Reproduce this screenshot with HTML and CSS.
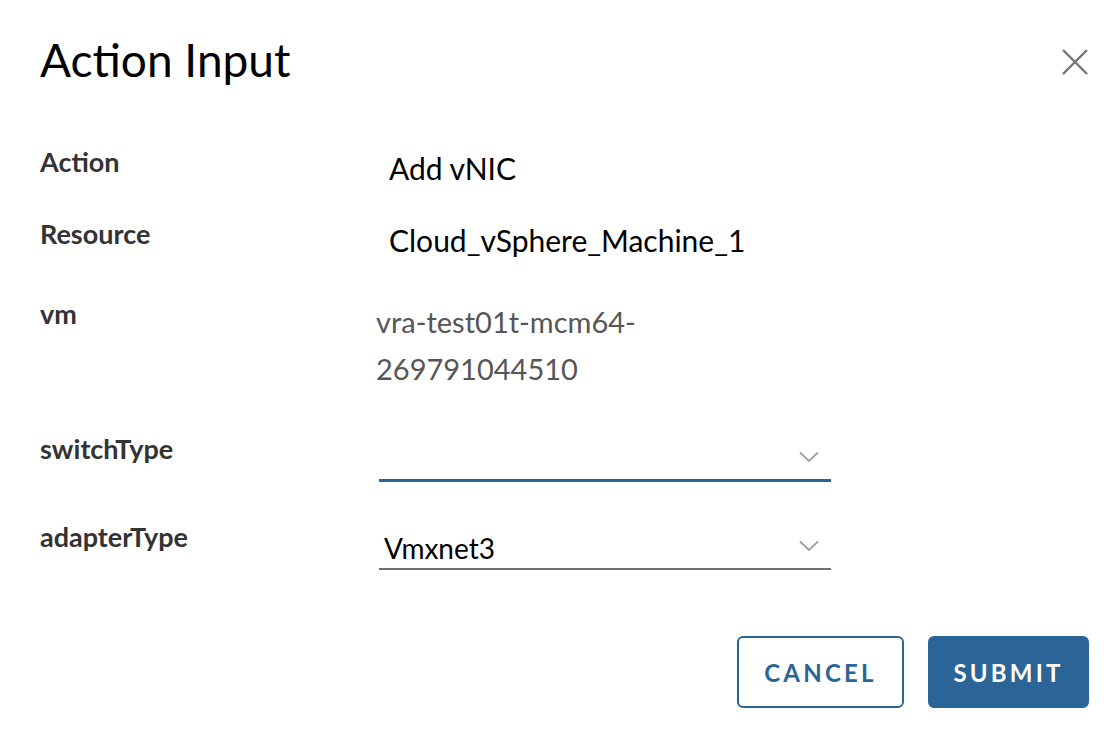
FILE: index.html
```html
<!DOCTYPE html>
<html>
<head>
<meta charset="utf-8">
<link rel="stylesheet" href="styles.css">
</head>
<body>
<div class="modal">
  <div class="header">
    <h1 class="title">Action Input</h1>
    <button class="close" aria-label="Close">
      <svg width="28" height="28" viewBox="0 0 28 28"><path d="M2 2 L26 26 M26 2 L2 26" stroke="#747474" stroke-width="2.4" fill="none"/></svg>
    </button>
  </div>
  <div class="form">
    <div class="row r1">
      <div class="label">Action</div>
      <div class="value ro">Add vNIC</div>
    </div>
    <div class="row r2">
      <div class="label">Resource</div>
      <div class="value ro">Cloud_vSphere_Machine_1</div>
    </div>
    <div class="row r3">
      <div class="label">vm</div>
      <div class="value muted">vra-test01t-mcm64-<br>269791044510</div>
    </div>
    <div class="row r4">
      <div class="label">switchType</div>
      <div class="select focused">
        <span class="sel-text"></span>
        <svg class="chev" width="20" height="12" viewBox="0 0 20 12"><path d="M1 1.5 L10 10 L19 1.5" stroke="#a0a0a0" stroke-width="1.8" fill="none"/></svg>
      </div>
    </div>
    <div class="row r5">
      <div class="label">adapterType</div>
      <div class="select">
        <span class="sel-text">Vmxnet3</span>
        <svg class="chev" width="20" height="12" viewBox="0 0 20 12"><path d="M1 1.5 L10 10 L19 1.5" stroke="#a0a0a0" stroke-width="1.8" fill="none"/></svg>
      </div>
    </div>
  </div>
  <div class="footer">
    <button class="btn btn-outline">CANCEL</button>
    <button class="btn btn-primary">SUBMIT</button>
  </div>
</div>
</body>
</html>
```
FILE: styles.css
```css
* { box-sizing: border-box; }
html, body { margin: 0; padding: 0; background: #ffffff; }
body { font-family: Lato, "Noto Sans", sans-serif; color: #000; }

.modal {
  width: 1120px;
  height: 740px;
  padding: 0 31px 0 40px;
}

.header {
  display: flex;
  justify-content: space-between;
  align-items: flex-start;
  padding-top: 32px;
  height: 148px;
}

.title {
  margin: 0;
  font-weight: 400;
  font-size: 46px;
  line-height: 56px;
  color: #000;
}

.close {
  margin-top: 16px;
  padding: 0;
  border: 0;
  background: none;
  width: 28px;
  height: 28px;
}
.close svg { display: block; }

.row {
  display: grid;
  grid-template-columns: 336px 455px;
  align-items: start;
}
.r1 { height: 72px; }
.r2 { height: 80px; }
.r3 { height: 135px; }
.r4 { height: 88px; }
.r5 { height: 113px; }

.label {
  font-weight: 700;
  font-size: 27px;
  line-height: 28px;
  color: #333;
}

.value {
  font-size: 30px;
  line-height: 32px;
}
.ro {
  padding-top: 4px;
  padding-left: 13px;
  color: #000;
}
.muted {
  font-size: 29px;
  color: #565656;
  line-height: 47px;
  margin-top: -2px;
}

.select {
  margin-left: 3px;
  height: 47px;
  border-bottom: 2px solid #6a7177;
  display: flex;
  align-items: center;
  justify-content: space-between;
  padding: 0 12px 0 5px;
}
.select.focused {
  border-bottom: 3px solid #2b6597;
}
.sel-text {
  font-size: 28px;
  line-height: 32px;
  color: #000;
  padding-top: 4px;
}
.chev { display: block; }

.footer {
  display: flex;
  justify-content: flex-end;
  gap: 24px;
}

.btn {
  height: 72px;
  border-radius: 6px;
  font-family: Lato, "Noto Sans", sans-serif;
  font-weight: 700;
  font-size: 24px;
  letter-spacing: 3.2px;
  padding: 0;
  cursor: pointer;
}
.btn-outline {
  width: 167px;
  background: #fff;
  border: 2px solid #2b6597;
  color: #2b6597;
}
.btn-primary {
  width: 161px;
  background: #2b6597;
  border: 2px solid #2b6597;
  color: #fff;
}
```
